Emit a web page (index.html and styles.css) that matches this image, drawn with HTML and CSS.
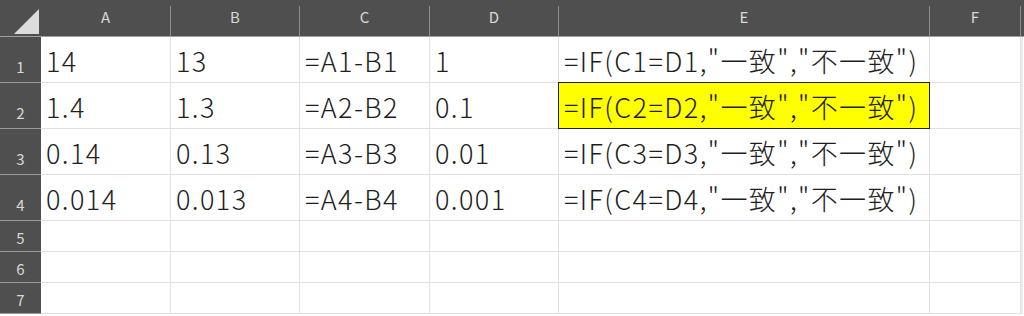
FILE: index.html
```html
<!DOCTYPE html>
<html lang="ja">
<head>
<meta charset="utf-8">
<title>Sheet</title>
<link rel="stylesheet" href="styles.css">
</head>
<body>
<div class="sheet">
  <div class="corner"><svg width="41" height="37" viewBox="0 0 41 37"><polygon points="14,34 39,34 39,9" fill="#dcdcdc"/></svg></div>
  <div class="colhead"><span>A</span></div>
  <div class="colhead"><span>B</span></div>
  <div class="colhead"><span>C</span></div>
  <div class="colhead"><span>D</span></div>
  <div class="colhead"><span>E</span></div>
  <div class="colhead"><span>F</span></div>
  <div class="colhead edge"><span></span></div>

  <div class="rowhead">1</div>
  <div class="cell">14</div>
  <div class="cell">13</div>
  <div class="cell">=A1-B1</div>
  <div class="cell">1</div>
  <div class="cell">=IF(C1=D1,"一致","不一致")</div>
  <div class="cell"></div>
  <div class="pad"></div>

  <div class="rowhead">2</div>
  <div class="cell">1.4</div>
  <div class="cell">1.3</div>
  <div class="cell">=A2-B2</div>
  <div class="cell">0.1</div>
  <div class="cell mark">=IF(C2=D2,"一致","不一致")</div>
  <div class="cell"></div>
  <div class="pad"></div>

  <div class="rowhead">3</div>
  <div class="cell">0.14</div>
  <div class="cell">0.13</div>
  <div class="cell">=A3-B3</div>
  <div class="cell">0.01</div>
  <div class="cell">=IF(C3=D3,"一致","不一致")</div>
  <div class="cell"></div>
  <div class="pad"></div>

  <div class="rowhead">4</div>
  <div class="cell">0.014</div>
  <div class="cell">0.013</div>
  <div class="cell">=A4-B4</div>
  <div class="cell">0.001</div>
  <div class="cell">=IF(C4=D4,"一致","不一致")</div>
  <div class="cell"></div>
  <div class="pad"></div>

  <div class="rowhead small">5</div>
  <div class="cell"></div><div class="cell"></div><div class="cell"></div><div class="cell"></div><div class="cell"></div><div class="cell"></div>
  <div class="pad"></div>

  <div class="rowhead small">6</div>
  <div class="cell"></div><div class="cell"></div><div class="cell"></div><div class="cell"></div><div class="cell"></div><div class="cell"></div>
  <div class="pad"></div>

  <div class="rowhead small">7</div>
  <div class="cell"></div><div class="cell"></div><div class="cell"></div><div class="cell"></div><div class="cell"></div><div class="cell"></div>
  <div class="pad"></div>
</div>
</body>
</html>
```

FILE: styles.css
```css
html, body {
  margin: 0;
  padding: 0;
  background: #ffffff;
}

.sheet {
  display: grid;
  grid-template-columns: 41px 130px 129px 130px 129px 371px 91px 1fr;
  grid-template-rows: 37px repeat(4, 46px) repeat(3, 31px);
  width: 1024px;
  height: 316px;
  overflow: hidden;
  font-family: "Noto Sans CJK JP", "Noto Sans", sans-serif;
}

.corner {
  background: #4f4f4f;
  border-bottom: 1px solid #a0a0a0;
  box-sizing: border-box;
  display: flex;
}

.colhead {
  background: #4f4f4f;
  border-bottom: 1px solid #a0a0a0;
  box-sizing: border-box;
  padding-top: 6px;
  display: flex;
}

.colhead span {
  flex: 1;
  border-right: 1px solid #8e8e8e;
  display: flex;
  justify-content: center;
  align-items: flex-start;
  color: #d8d8d8;
  font-size: 15px;
  line-height: 22px;
}

.colhead.edge span {
  border-right: none;
}

.rowhead {
  background: #4f4f4f;
  border-bottom: 1px solid #9a9a9a;
  box-sizing: border-box;
  color: #d8d8d8;
  font-size: 15px;
  line-height: 15px;
  display: flex;
  justify-content: center;
  align-items: flex-end;
  padding-bottom: 8px;
}

.rowhead.small {
  padding-bottom: 6px;
}

.cell {
  border-right: 1px solid #e1e1e1;
  border-bottom: 1px solid #e1e1e1;
  box-sizing: border-box;
  color: #1e1e1e;
  font-size: 27px;
  font-weight: 300;
  letter-spacing: 1.4px;
  line-height: 27px;
  white-space: nowrap;
  display: flex;
  align-items: flex-end;
  padding: 0 0 8px 5px;
}

.cell.mark {
  background: #ffff00;
  border: 1px solid #222222;
  margin: -1px 0 0 -1px;
  padding-left: 5px;
}

.pad {
  background: #ffffff;
  border-left: 2px solid #ececec;
}
```
